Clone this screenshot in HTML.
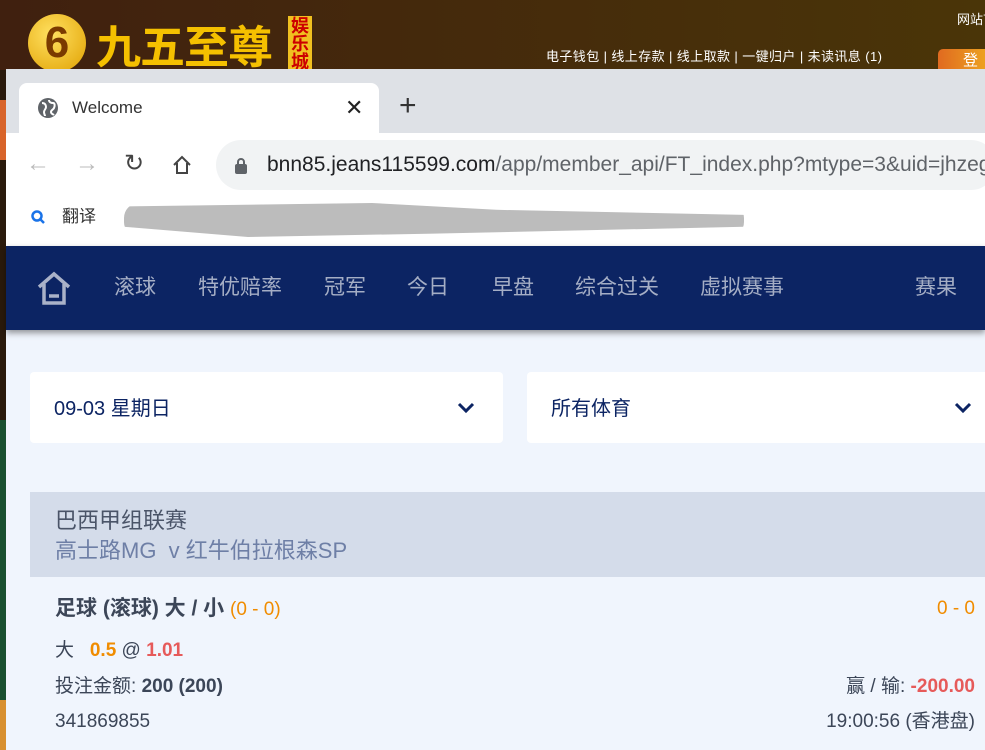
<!DOCTYPE html>
<html><head><meta charset="utf-8"><style>
*{margin:0;padding:0;box-sizing:border-box}
body{width:985px;height:750px;overflow:hidden;position:relative;font-family:"Liberation Sans","Noto Sans CJK SC",sans-serif;background:#2a1a0c}
.a{position:absolute;line-height:24px;white-space:nowrap}
</style></head><body>
<div class="a" style="left:0;top:0;width:985px;height:70px;background:linear-gradient(90deg,#40200f,#4a3508)"></div>
<div class="a" style="left:28px;top:14px;width:58px;height:58px;border-radius:50%;background:radial-gradient(circle at 40% 35%,#ffe060,#e0a000);color:#7a3a00;font:bold 44px 'Liberation Sans';text-align:center;line-height:58px">6</div>
<div class="a" style="left:96px;top:18px;font:bold 45px 'Noto Sans CJK SC';color:#f5c000;line-height:52px;letter-spacing:-1px">九五至尊</div>
<div class="a" style="left:288px;top:16px;width:24px;height:54px;background:#f0c020;color:#c00;font:bold 18px 'Noto Sans CJK SC';line-height:18px;text-align:center;white-space:normal">娱乐城</div>
<div class="a" style="left:546px;top:45px;font-size:13px;color:#fff;letter-spacing:0.4px">电子钱包 | 线上存款 | 线上取款 | 一键归户 | 未读讯息 (1)</div>
<div class="a" style="left:957px;top:8px;font-size:13px;color:#fff">网站首</div>
<div class="a" style="left:938px;top:49px;width:60px;height:22px;border-radius:5px 5px 0 0;background:linear-gradient(90deg,#e06a20,#f0b020);color:#fff;font-size:15px;padding:0 25px">登</div>
<div class="a" style="left:0;top:100px;width:6px;height:60px;background:#d8642a"></div>
<div class="a" style="left:0;top:420px;width:6px;height:280px;background:#1a5030"></div>
<div class="a" style="left:0;top:700px;width:6px;height:50px;background:#d89030"></div>
<!-- browser -->
<div class="a" style="left:6px;top:69px;width:979px;height:681px;background:#f0f5fd"></div>
<div class="a" style="left:6px;top:69px;width:979px;height:64px;background:#dee1e6"></div>
<div class="a" style="left:19px;top:83px;width:360px;height:50px;background:#fff;border-radius:8px 8px 0 0"></div>
<svg class="a" style="left:37px;top:97px" width="22" height="22" viewBox="0 0 22 22"><circle cx="11" cy="11" r="10" fill="#5f6368"/><path d="M5 6c3 0 4 2 4 4s-2 3-2 5c0 2 1 3 1 4M12 3c0 2 2 3 4 3s2 3 1 5-3 2-3 4 2 2 3 3" stroke="#fff" stroke-width="2" fill="none"/></svg>
<div class="a" style="left:72px;top:96px;font-size:17px;color:#333">Welcome</div>
<div class="a" style="left:345px;top:96px;font-size:22px;color:#222">✕</div>
<div class="a" style="left:399px;top:94px;font-size:30px;color:#333;font-weight:300">+</div>
<div class="a" style="left:6px;top:133px;width:979px;height:113px;background:#fff"></div>
<div class="a" style="left:26px;top:152px;font-size:24px;color:#bbb">←</div>
<div class="a" style="left:75px;top:152px;font-size:24px;color:#bbb">→</div>
<div class="a" style="left:124px;top:152px;font-size:24px;color:#444">↻</div>
<svg class="a" style="left:171px;top:154px" width="22" height="22" viewBox="0 0 22 22"><path d="M3 11L11 3 19 11M6 9v10h10V9" stroke="#444" stroke-width="2" fill="none"/></svg>
<div class="a" style="left:216px;top:140px;width:780px;height:50px;background:#f1f3f4;border-radius:25px"></div>
<svg class="a" style="left:234px;top:157px" width="14" height="18" viewBox="0 0 14 18"><rect x="1" y="7" width="12" height="10" rx="2" fill="#5f6368"/><path d="M4 7V5a3 3 0 016 0v2" stroke="#5f6368" stroke-width="2" fill="none"/></svg>
<div class="a" style="left:267px;top:153px;font-size:21px;color:#202124">bnn85.jeans115599.com<span style="color:#5f6368">/app/member_api/FT_index.php?mtype=3&amp;uid=jhzeg</span></div>
<svg class="a" style="left:30px;top:209px" width="16" height="16" viewBox="0 0 16 16"><circle cx="7" cy="7" r="4.5" stroke="#1a73e8" stroke-width="2.5" fill="none"/><path d="M10 10l4 4" stroke="#1a73e8" stroke-width="2.5"/></svg>
<div class="a" style="left:62px;top:205px;font-size:17px;color:#333">翻译</div>
<div class="a" style="left:124px;top:203px;width:620px;height:34px;background:#bcbcbc;border-radius:15px;clip-path:polygon(0 10%,40% 0,60% 20%,100% 35%,100% 70%,50% 90%,20% 100%,0 70%)"></div>
<!-- nav -->
<div class="a" style="left:6px;top:246px;width:979px;height:84px;background:#0c2463;box-shadow:0 3px 6px rgba(0,0,0,.4)"></div>
<svg class="a" style="left:36px;top:271px" width="36" height="34" viewBox="0 0 36 34"><path d="M3 16L18 3 33 16M8 13v19h20V13" stroke="#aab2c8" stroke-width="3.5" fill="none"/><path d="M13 25h10" stroke="#aab2c8" stroke-width="3.5"/></svg>
<div class="a" style="top:276px;left:0;width:985px;font-size:21px;color:#a5aec5">
<span class="a" style="left:114px">滚球</span><span class="a" style="left:198px">特优赔率</span><span class="a" style="left:324px">冠军</span><span class="a" style="left:407px">今日</span><span class="a" style="left:492px">早盘</span><span class="a" style="left:575px">综合过关</span><span class="a" style="left:700px">虚拟赛事</span><span class="a" style="left:915px">赛果</span></div>
<!-- selects -->
<div class="a" style="left:30px;top:372px;width:473px;height:71px;background:#fff;border-radius:4px"></div>
<div class="a" style="left:54px;top:397px;font-size:20px;color:#0c2463">09-03 星期日</div>
<svg class="a" style="left:457px;top:402px" width="18" height="12" viewBox="0 0 18 12"><path d="M2 2l7 7 7-7" stroke="#0c2463" stroke-width="3" fill="none"/></svg>
<div class="a" style="left:527px;top:372px;width:470px;height:71px;background:#fff;border-radius:4px"></div>
<div class="a" style="left:551px;top:397px;font-size:20px;color:#0c2463">所有体育</div>
<svg class="a" style="left:954px;top:402px" width="18" height="12" viewBox="0 0 18 12"><path d="M2 2l7 7 7-7" stroke="#0c2463" stroke-width="3" fill="none"/></svg>
<!-- match -->
<div class="a" style="left:30px;top:492px;width:960px;height:85px;background:#d4dcea"></div>
<div class="a" style="left:55px;top:509px;font-size:22px;color:#4a5468">巴西甲组联赛</div>
<div class="a" style="left:55px;top:539px;font-size:22px;color:#6e7fa6">高士路MG &nbsp;v 红牛伯拉根森SP</div>
<div class="a" style="left:55px;top:597px;font-size:21px;color:#3c4658;font-weight:bold">足球 (滚球) 大 / 小 <span style="color:#f08c00;font-weight:normal;font-size:19px">(0 - 0)</span></div>
<div class="a" style="right:10px;top:597px;font-size:19px;color:#f08c00">0 - 0</div>
<div class="a" style="left:55px;top:639px;font-size:19px;color:#3c4658">大 &nbsp;&nbsp;<b style="color:#f08c00">0.5</b> @ <b style="color:#e65a5a">1.01</b></div>
<div class="a" style="left:55px;top:675px;font-size:19px;color:#3c4658">投注金额: <b>200 (200)</b></div>
<div class="a" style="right:10px;top:675px;font-size:19px;color:#3c4658">赢 / 输: <b style="color:#e65a5a">-200.00</b></div>
<div class="a" style="left:55px;top:710px;font-size:19px;color:#3c4658">341869855</div>
<div class="a" style="right:10px;top:710px;font-size:19px;color:#3c4658">19:00:56 (香港盘)</div>
</body></html>
